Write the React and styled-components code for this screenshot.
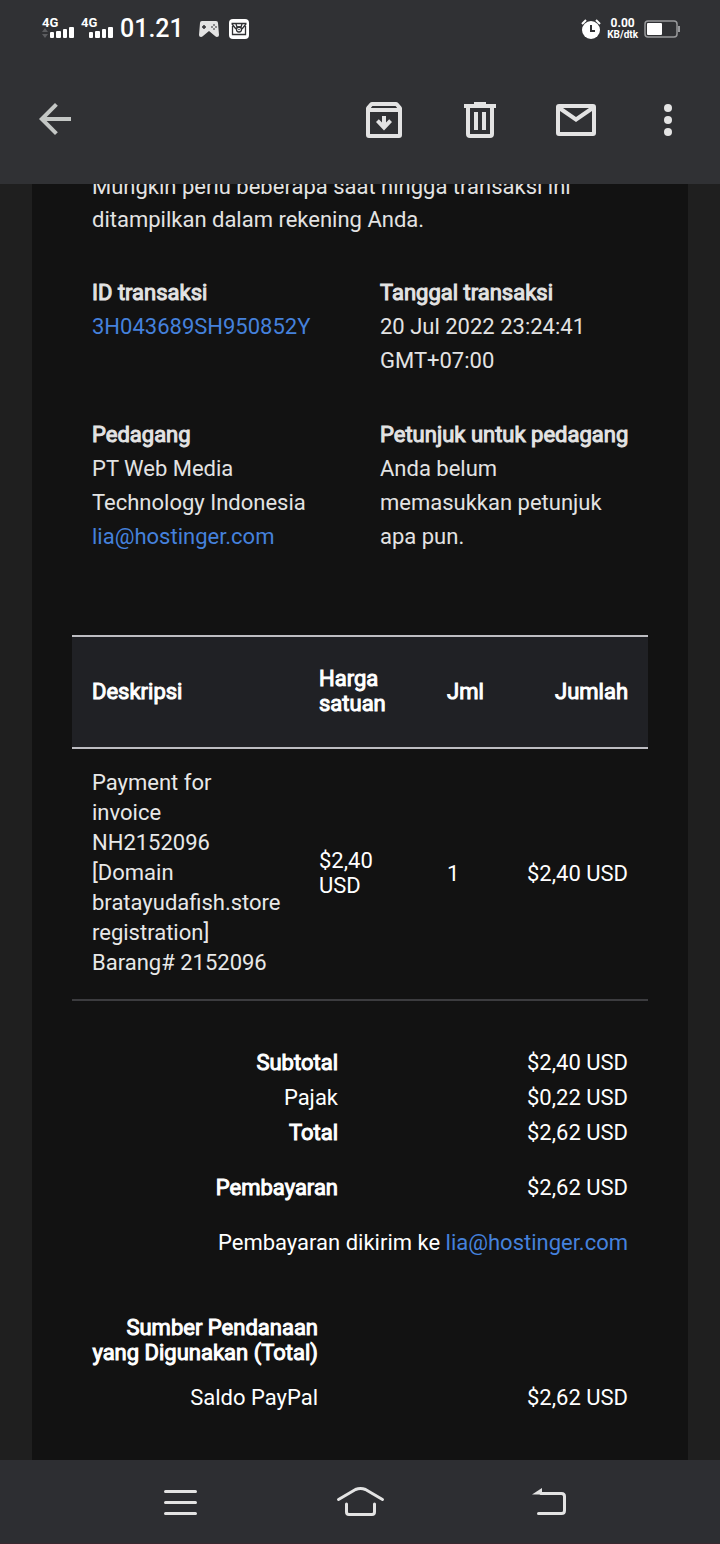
import React from "react";
import styled, { createGlobalStyle } from "styled-components";

const GlobalStyle = createGlobalStyle`
  *, *::before, *::after { box-sizing: border-box; }
  body {
    margin: 0;
    background: #1f1f1f;
    color: #e3e3e3;
    font-family: Roboto, "Liberation Sans", sans-serif;
    font-size: 22px;
    line-height: 25px;
  }
`;

const Screen = styled.div`
  min-height: 100vh;
  display: flex;
  flex-direction: column;
`;

const Header = styled.header`
  position: sticky;
  top: 0;
  z-index: 1;
  height: 184px;
  background: #303134;
  display: flex;
  flex-direction: column;
`;

const StatusBar = styled.div`
  height: 56px;
  padding: 2px 40px 0 42px;
  display: flex;
  align-items: center;
  justify-content: space-between;
  color: #fff;
`;

const StatusGroup = styled.div`
  display: flex;
  align-items: center;
  gap: ${(p) => p.$gap}px;
`;

const Signal = styled.div`
  position: relative;
  width: 32px;
  height: 20px;

  span {
    position: absolute;
    top: -2px;
    left: 0;
    font-size: 13px;
    line-height: 12px;
    font-weight: 700;
  }
  svg { display: block; }
`;

const Clock = styled.time`
  font-size: 25px;
  line-height: 28px;
  font-weight: 500;
  margin-right: 8px;
`;

const Speed = styled.div`
  display: flex;
  flex-direction: column;
  align-items: center;
  font-weight: 700;
  font-size: ${(p) => p.$size}px;
  line-height: 11px;

  small { font-size: 10px; }
`;

const Toolbar = styled.nav`
  height: 128px;
  padding: 0 32px 0 31px;
  display: flex;
  align-items: center;
`;

const Actions = styled.div`
  display: flex;
  gap: 48px;
  margin-left: auto;
`;

const IconButton = styled.button`
  width: ${(p) => p.$width || 48}px;
  height: 48px;
  padding: 0;
  border: 0;
  background: none;
  color: ${(p) => (p.$dim ? "#c4c7c5" : "#e3e3e3")};
  display: flex;
  align-items: center;
  justify-content: center;

  svg { flex: none; display: block; }
`;

const Main = styled.main`
  flex: 1;
  padding: 0 32px;
  display: flex;
`;

const Card = styled.article`
  flex: 1;
  min-width: 0;
  margin-top: -14px;
  padding: 0 40px 40px;
  background: #121212;
`;

const Notice = styled.p`
  margin: 0 0 40px;
  padding: 0 20px;
  line-height: 33px;
`;

const Link = styled.a`
  color: #4581dc;
  text-decoration: none;
`;

const Details = styled.dl`
  margin: 0 0 81px;
  display: grid;
  grid-template-columns: minmax(0, 1fr) minmax(0, 1fr);
  row-gap: 40px;
  line-height: 34px;
`;

const Detail = styled.div`
  padding: 0 20px;

  dt {
    white-space: nowrap;
    -webkit-text-stroke: 1px currentColor;
  }
  dd { margin: 0; }
`;

const Items = styled.table`
  width: 100%;
  table-layout: fixed;
  border-collapse: separate;
  border-spacing: 0;
  color: #fff;

  th, td {
    padding: 19px 20px 21px;
    text-align: left;
    font-weight: 400;
  }
  th {
    height: 114px;
    background: #202125;
    border-top: 2px solid #bdbdc2;
    border-bottom: 2px solid #bdbdc2;
    -webkit-text-stroke: 1px currentColor;
  }
  td { border-bottom: 2px solid #3c3c3f; }
  th:last-child, td:last-child { text-align: right; padding-left: 0; white-space: nowrap; }
`;

const Column = styled.col`
  width: ${(p) => p.$width};
`;

const Description = styled.div`
  color: #e8e8e8;
  line-height: 30px;
`;

const Summary = styled.table`
  width: 100%;
  margin-top: ${(p) => p.$top}px;
  table-layout: fixed;
  border-collapse: separate;
  border-spacing: 0;
  color: #fff;

  th, td {
    padding: 5px 20px;
    text-align: right;
    font-weight: 400;
  }
  th {
    width: ${(p) => p.$label}px;
    padding-left: 16px;
  }
`;

const SummaryRow = styled.tr`
  th { -webkit-text-stroke: ${(p) => (p.$strong ? "1px currentColor" : "0")}; }
  && th, && td { padding-top: ${(p) => p.$top || 5}px; }
`;

const NavBar = styled.nav`
  position: sticky;
  bottom: 0;
  height: 84px;
  background: #2d2e32;
  border-bottom: 1px solid #38282f;
  display: flex;
  align-items: center;
  justify-content: center;
  gap: 120px;
`;

function SignalBars({ data }) {
  return (
    <Signal>
      <span>4G</span>
      <svg width="32" height="20" viewBox="0 0 32 20" fill="#fff" aria-hidden="true">
        {data && <path d="M0 13l3-4 3 4zM0 15h6l-3 4z" fill="#5c5d60" />}
        <rect x="8" y="13" width="4" height="6" rx="1" />
        <rect x="14" y="12" width="5" height="7" rx="1" />
        <rect x="21" y="10" width="4" height="9" rx="1" />
        <rect x="27" y="8" width="5" height="11" rx="1" />
      </svg>
    </Signal>
  );
}

function ToolIcon({ children }) {
  return (
    <svg width="48" height="48" viewBox="0 0 24 24" fill="currentColor" aria-hidden="true">
      {children}
    </svg>
  );
}

function NavIcon({ children }) {
  return (
    <svg
      width="60"
      height="40"
      viewBox="0 0 60 40"
      fill="none"
      stroke="currentColor"
      strokeWidth="3"
      strokeLinecap="round"
      strokeLinejoin="round"
      aria-hidden="true"
    >
      {children}
    </svg>
  );
}

const EMAIL = "lia@hostinger.com";

export default function App() {
  return (
    <Screen>
      <GlobalStyle />
      <Header>
        <StatusBar>
          <StatusGroup $gap={7}>
            <SignalBars data />
            <SignalBars />
            <Clock>01.21</Clock>
            <svg width="20" height="18" viewBox="0 0 20 18" aria-hidden="true">
              <path d="M3 1h14q2 0 2 2l1 12q0 2-2 2-1 0-2-1l-6-5-6 5q-1 1-2 1-2 0-2-2L1 3q0-2 2-2z" fill="#e3e3e3" />
              <path d="M5 5v4M3 7h4" stroke="#303134" strokeWidth="1.500" />
              <path d="M15 4l1 1-1 1-1-1zM15 8l1 1-1 1-1-1zM13 6l1 1-1 1-1-1zM17 6l1 1-1 1-1-1z" fill="#303134" />
            </svg>
            <svg width="23" height="20" viewBox="-3 0 23 20" fill="none" aria-hidden="true">
              <rect width="20" height="20" rx="4" fill="#fff" />
              <path d="M3.500 7v8.500h13V7M2.500 4.500h15M3 5l4 5M17 5l-4 5M7 5l1 3h4l1-3" stroke="#303134" strokeWidth="1.300" />
              <circle cx="10" cy="10.500" r="2.500" stroke="#303134" strokeWidth="1.300" />
              <circle cx="10" cy="10.500" r=".8" fill="#303134" />
            </svg>
          </StatusGroup>
          <StatusGroup $gap={6}>
            <svg width="20" height="20" viewBox="0 0 20 20" fill="none" aria-hidden="true">
              <circle cx="10" cy="11" r="9" fill="#fff" />
              <path d="M1 5l4-4M19 5l-4-4" stroke="#fff" strokeWidth="2" />
              <path d="M10 6v6h4" stroke="#303134" strokeWidth="2" />
            </svg>
            <Speed $size={12}>
              <span>0.00</span>
              <small>KB/dtk</small>
            </Speed>
            <svg width="36" height="18" viewBox="0 0 36 18" aria-hidden="true">
              <rect x="1" y="1" width="32" height="16" rx="3" fill="none" stroke="#98999b" strokeWidth="1.500" />
              <path d="M35 6v6" stroke="#98999b" strokeWidth="2" />
              <rect x="3" y="3" width="15" height="12" rx="1" fill="#fff" />
            </svg>
          </StatusGroup>
        </StatusBar>
        <Toolbar>
          <IconButton $dim aria-label="Kembali">
            <ToolIcon>
              <path d="M20 10.500H7.830l5.590-5.590L12 3.500l-8 8 8 8 1.410-1.410L7.830 12.500H20v-2z" />
            </ToolIcon>
          </IconButton>
          <Actions>
            <IconButton aria-label="Arsipkan">
              <ToolIcon>
                <path
                  fillRule="evenodd"
                  d="M6 3h12q.6 0 1 .4l1.500 1.700q.5.500.5 1.200V19.500q0 1.500-1.500 1.500h-15Q3 21 3 19.500V6.300q0-.7.500-1.200L5 3.400Q5.400 3 6 3zM6.200 5l-.8 1h13.200l-.8-1zM5 8v11h14V8z"
                />
                <path d="M11 10h2v3.200l1.600-1.600L16 13l-4 4.300L8 13l1.400-1.400 1.600 1.600z" />
              </ToolIcon>
            </IconButton>
            <IconButton aria-label="Hapus">
              <ToolIcon>
                <path
                  fillRule="evenodd"
                  d="M9 3h6v1h5v2h-1v13q0 2-2 2H7q-2 0-2-2V6H4V4h5zM7 6v13h10V6zM9 8h2v9H9zM13 8h2v9h-2z"
                />
              </ToolIcon>
            </IconButton>
            <IconButton aria-label="Tandai belum dibaca">
              <ToolIcon>
                <path
                  fillRule="evenodd"
                  d="M3.500 4h17Q22 4 22 5.500v13q0 1.500-1.500 1.500h-17Q2 20 2 18.500v-13Q2 4 3.500 4zM5.500 6L12 10.500 18.500 6zM4 7.500V18h16V7.500L12 13z"
                />
              </ToolIcon>
            </IconButton>
            <IconButton $width={40} aria-label="Opsi lainnya">
              <ToolIcon>
                <circle cx="12" cy="6" r="2" />
                <circle cx="12" cy="12" r="2" />
                <circle cx="12" cy="18" r="2" />
              </ToolIcon>
            </IconButton>
          </Actions>
        </Toolbar>
      </Header>

      <Main>
        <Card>
          <Notice>Mungkin perlu beberapa saat hingga transaksi ini ditampilkan dalam rekening Anda.</Notice>

          <Details>
            <Detail>
              <dt>ID transaksi</dt>
              <dd><Link href="#transaksi">3H043689SH950852Y</Link></dd>
            </Detail>
            <Detail>
              <dt>Tanggal transaksi</dt>
              <dd>20 Jul 2022 23:24:41 GMT+07:00</dd>
            </Detail>
            <Detail>
              <dt>Pedagang</dt>
              <dd>PT Web Media Technology Indonesia</dd>
              <dd><Link href={`mailto:${EMAIL}`}>{EMAIL}</Link></dd>
            </Detail>
            <Detail>
              <dt>Petunjuk untuk pedagang</dt>
              <dd>Anda belum memasukkan petunjuk apa pun.</dd>
            </Detail>
          </Details>

          <Items>
            <colgroup>
              <Column $width="auto" />
              <Column $width="128px" />
              <Column $width="81px" />
              <Column $width="140px" />
            </colgroup>
            <thead>
              <tr>
                <th scope="col">Deskripsi</th>
                <th scope="col">Harga satuan</th>
                <th scope="col">Jml</th>
                <th scope="col">Jumlah</th>
              </tr>
            </thead>
            <tbody>
              <tr>
                <td>
                  <Description>
                    Payment for invoice NH2152096 [Domain bratayudafish.store registration]
                  </Description>
                  <Description>Barang# 2152096</Description>
                </td>
                <td>$2,40 USD</td>
                <td>1</td>
                <td>$2,40 USD</td>
              </tr>
            </tbody>
          </Items>

          <Summary $top={44} $label={286}>
            <tbody>
              <SummaryRow $strong>
                <th scope="row">Subtotal</th>
                <td>$2,40 USD</td>
              </SummaryRow>
              <SummaryRow>
                <th scope="row">Pajak</th>
                <td>$0,22 USD</td>
              </SummaryRow>
              <SummaryRow $strong>
                <th scope="row">Total</th>
                <td>$2,62 USD</td>
              </SummaryRow>
              <SummaryRow $strong $top={25}>
                <th scope="row">Pembayaran</th>
                <td>$2,62 USD</td>
              </SummaryRow>
              <SummaryRow $top={25}>
                <td colSpan={2}>
                  Pembayaran dikirim ke <Link href={`mailto:${EMAIL}`}>{EMAIL}</Link>
                </td>
              </SummaryRow>
            </tbody>
          </Summary>

          <Summary $top={50} $label={266}>
            <tbody>
              <SummaryRow $strong>
                <th scope="row">Sumber Pendanaan yang Digunakan (Total)</th>
                <td />
              </SummaryRow>
              <SummaryRow $top={15}>
                <th scope="row">Saldo PayPal</th>
                <td>$2,62 USD</td>
              </SummaryRow>
            </tbody>
          </Summary>
        </Card>
      </Main>

      <NavBar>
        <IconButton $width={60} aria-label="Aplikasi terbaru">
          <NavIcon>
            <path d="M15.500 9.500h30M15.500 20.500h30M15.500 31.500h30" />
          </NavIcon>
        </IconButton>
        <IconButton $width={60} aria-label="Beranda">
          <NavIcon>
            <path d="M8.500 17.500l17-10q5-2 10 0l17 10M16.500 22v8q0 2.500 2.500 2.500h23q2.500 0 2.500-2.500v-8" />
          </NavIcon>
        </IconButton>
        <IconButton $width={60} aria-label="Kembali ke layar sebelumnya">
          <NavIcon>
            <path d="M31 11.500h20.500q3 0 3 3V28.500q0 3-3 3H28.500" />
            <path d="M22 12.500L32 6v6.500z" fill="currentColor" stroke="none" />
          </NavIcon>
        </IconButton>
      </NavBar>
    </Screen>
  );
}
